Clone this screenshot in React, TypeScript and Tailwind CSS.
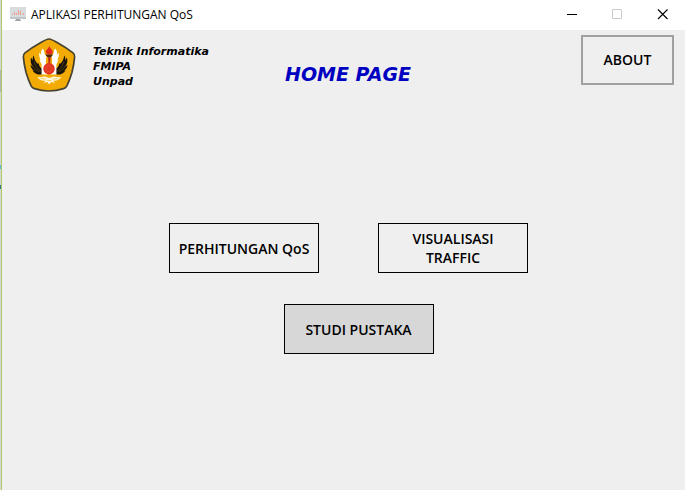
import type { ReactNode } from "react";

function MonitorIcon() {
  return (
    <svg className="h-4 w-4 shrink-0" viewBox="0 0 16 16" aria-hidden="true">
      <rect x="0" y="0" width="16" height="10" fill="#d9dcde" />
      <rect x="0" y="10" width="16" height="2" fill="#c2c6c9" />
      <path d="M6 12h4v1h1v1H5v-1h1z" fill="#a3a3a3" />
      <path
        d="M2.5 7v1M4.5 5v3M6.5 6v2M8.5 3v5M10.5 4v4M13.5 6v2"
        stroke="#ee9b8c"
        strokeWidth="1"
        fill="none"
      />
    </svg>
  );
}

function Wing() {
  return (
    <g>
      <path
        d="M55 69C56 80 60 88 67 93L69 92C71 101 76 108 84 110V124C70 128 57 123 51 113L58 115C51 112 46 105 45 96L52 102C46 95 44 84 47 75L52 84C51 78 52 73 55 69Z"
        fill="#17130d"
      />
      <path
        d="M56 87C59 99 66 110 77 116M51 98C55 107 62 113 71 117"
        stroke="#c88f0a"
        strokeWidth="1"
        fill="none"
      />
      <path
        d="M82 48C76 54 75 61 77 67L71 60C70 70 72 77 76 82L72 80C73 87 76 91 78 94V125H96V74L88 66C85 59 86 53 82 48Z"
        fill="#ffffff"
      />
    </g>
  );
}

function UniversityCrest() {
  return (
    <svg
      className="h-[54px] w-[54px] shrink-0"
      viewBox="20 17 160 160"
      role="img"
      aria-label="Unpad"
    >
      <path
        d="M100 20Q107 20 129 33Q151 45 171 61Q177 66 176 73Q174 96 168 119Q161 142 153 159Q150 165 143 167Q122 174 100 174Q78 174 57 167Q50 165 47 159Q39 142 32 119Q26 96 24 73Q23 66 29 61Q49 45 71 33Q93 20 100 20Z"
        fill="#f2aa05"
        stroke="#46422f"
        strokeWidth="5"
      />
      <Wing />
      <g transform="matrix(-1 0 0 1 200 0)">
        <Wing />
      </g>
      <path d="M91 74H109V94H91Z" fill="#f2aa05" />
      <path
        d="M101 41C98 50 89 53 91 61C94 68 108 68 111 61C113 53 104 50 101 41Z"
        fill="#e3291b"
      />
      <path d="M89 66H112L106 74H95Z" fill="#4a2710" />
      <path d="M97 73H105L103 94H99Z" fill="#b92d18" />
      <circle cx="100" cy="108" r="17" fill="#e33620" />
      <circle
        cx="100"
        cy="108"
        r="9"
        fill="none"
        stroke="#f07a50"
        strokeWidth="2"
        strokeDasharray="3 3"
      />
      <path
        d="M65 132C76 137 84 127 94 133Q101 137 108 133C118 127 126 137 137 132C131 142 121 145 112 143L118 150L106 147L101 155L95 147L84 150L90 143C80 145 71 142 65 132Z"
        fill="#fff7dd"
      />
      <path
        d="M76 137L91 139M111 139L126 137M95 143H107"
        stroke="#f2b632"
        strokeWidth="2"
      />
    </svg>
  );
}

function WindowButton({
  label,
  disabled = false,
  children,
}: {
  label: string;
  disabled?: boolean;
  children: ReactNode;
}) {
  return (
    <button
      type="button"
      aria-label={label}
      disabled={disabled}
      className="flex h-full w-[45px] items-start justify-center pt-[9px]"
    >
      <svg className="h-[11px] w-[11px]" viewBox="0 0 11 11" fill="none" aria-hidden="true">
        {children}
      </svg>
    </button>
  );
}

function MenuButton({ children, active = false }: { children: ReactNode; active?: boolean }) {
  return (
    <button
      type="button"
      className={`h-[50px] w-[150px] border border-black px-1 text-sm leading-[19px] font-semibold whitespace-nowrap text-black ${
        active ? "bg-[#d7d7d7]" : "bg-[#efefef]"
      }`}
    >
      {children}
    </button>
  );
}

export default function App() {
  return (
    <div className="flex min-h-screen bg-[#efefef] font-['Open_Sans','Noto_Sans',sans-serif] text-black">
      <div className="flex w-px flex-col bg-[#d6d6d6]" aria-hidden="true">
        <span className="mt-[70px] h-[22px] bg-[#b3b3b3]" />
        <span className="mt-[73px] h-1 bg-[#5eb3d8]" />
        <span className="mt-4 h-1 bg-[#35718c]" />
      </div>
      <div className="flex min-w-0 flex-1 flex-col border-l border-[#a9cf62]">
        <div className="flex h-[30px] items-center bg-white pl-2">
          <MonitorIcon />
          <span className="ml-[5px] flex-1 text-xs whitespace-nowrap">APLIKASI PERHITUNGAN QoS</span>
          <WindowButton label="Minimize">
            <path d="M0 5.5H10" stroke="#000" />
          </WindowButton>
          <WindowButton label="Maximize" disabled>
            <path d="M0.5 0.5H9.5V9.5H0.5Z" stroke="#ccc" />
          </WindowButton>
          <WindowButton label="Close">
            <path d="M1 0.5L10.5 10M10.5 0.5L1 10" stroke="#000" strokeWidth="1.1" />
          </WindowButton>
        </div>

        <header className="grid grid-cols-[1fr_auto_1fr] items-start pt-[5px] pr-[11px] pl-5">
          <div className="flex items-center gap-[17px] pt-[3px]">
            <UniversityCrest />
            <p className="pt-0.5 font-['DejaVu_Sans',sans-serif] text-[11px] leading-[15px] font-bold whitespace-nowrap italic">
              Teknik Informatika
              <br />
              FMIPA
              <br />
              Unpad
            </p>
          </div>
          <h1 className="pt-[23px] font-['DejaVu_Sans',sans-serif] text-[19px] leading-8 font-bold whitespace-nowrap text-[#0000c0] italic">
            HOME PAGE
          </h1>
          <button
            type="button"
            className="h-[50px] w-[93px] justify-self-end border-2 border-[#a0a0a0] text-sm font-semibold"
          >
            ABOUT
          </button>
        </header>

        <main className="flex flex-col gap-[31px] pt-[131px] pl-[10px]">
          <div className="flex justify-center gap-[59px]">
            <MenuButton>PERHITUNGAN QoS</MenuButton>
            <MenuButton>
              VISUALISASI
              <br />
              TRAFFIC
            </MenuButton>
          </div>
          <div className="flex justify-center pl-5">
            <MenuButton active>STUDI PUSTAKA</MenuButton>
          </div>
        </main>
      </div>
    </div>
  );
}
